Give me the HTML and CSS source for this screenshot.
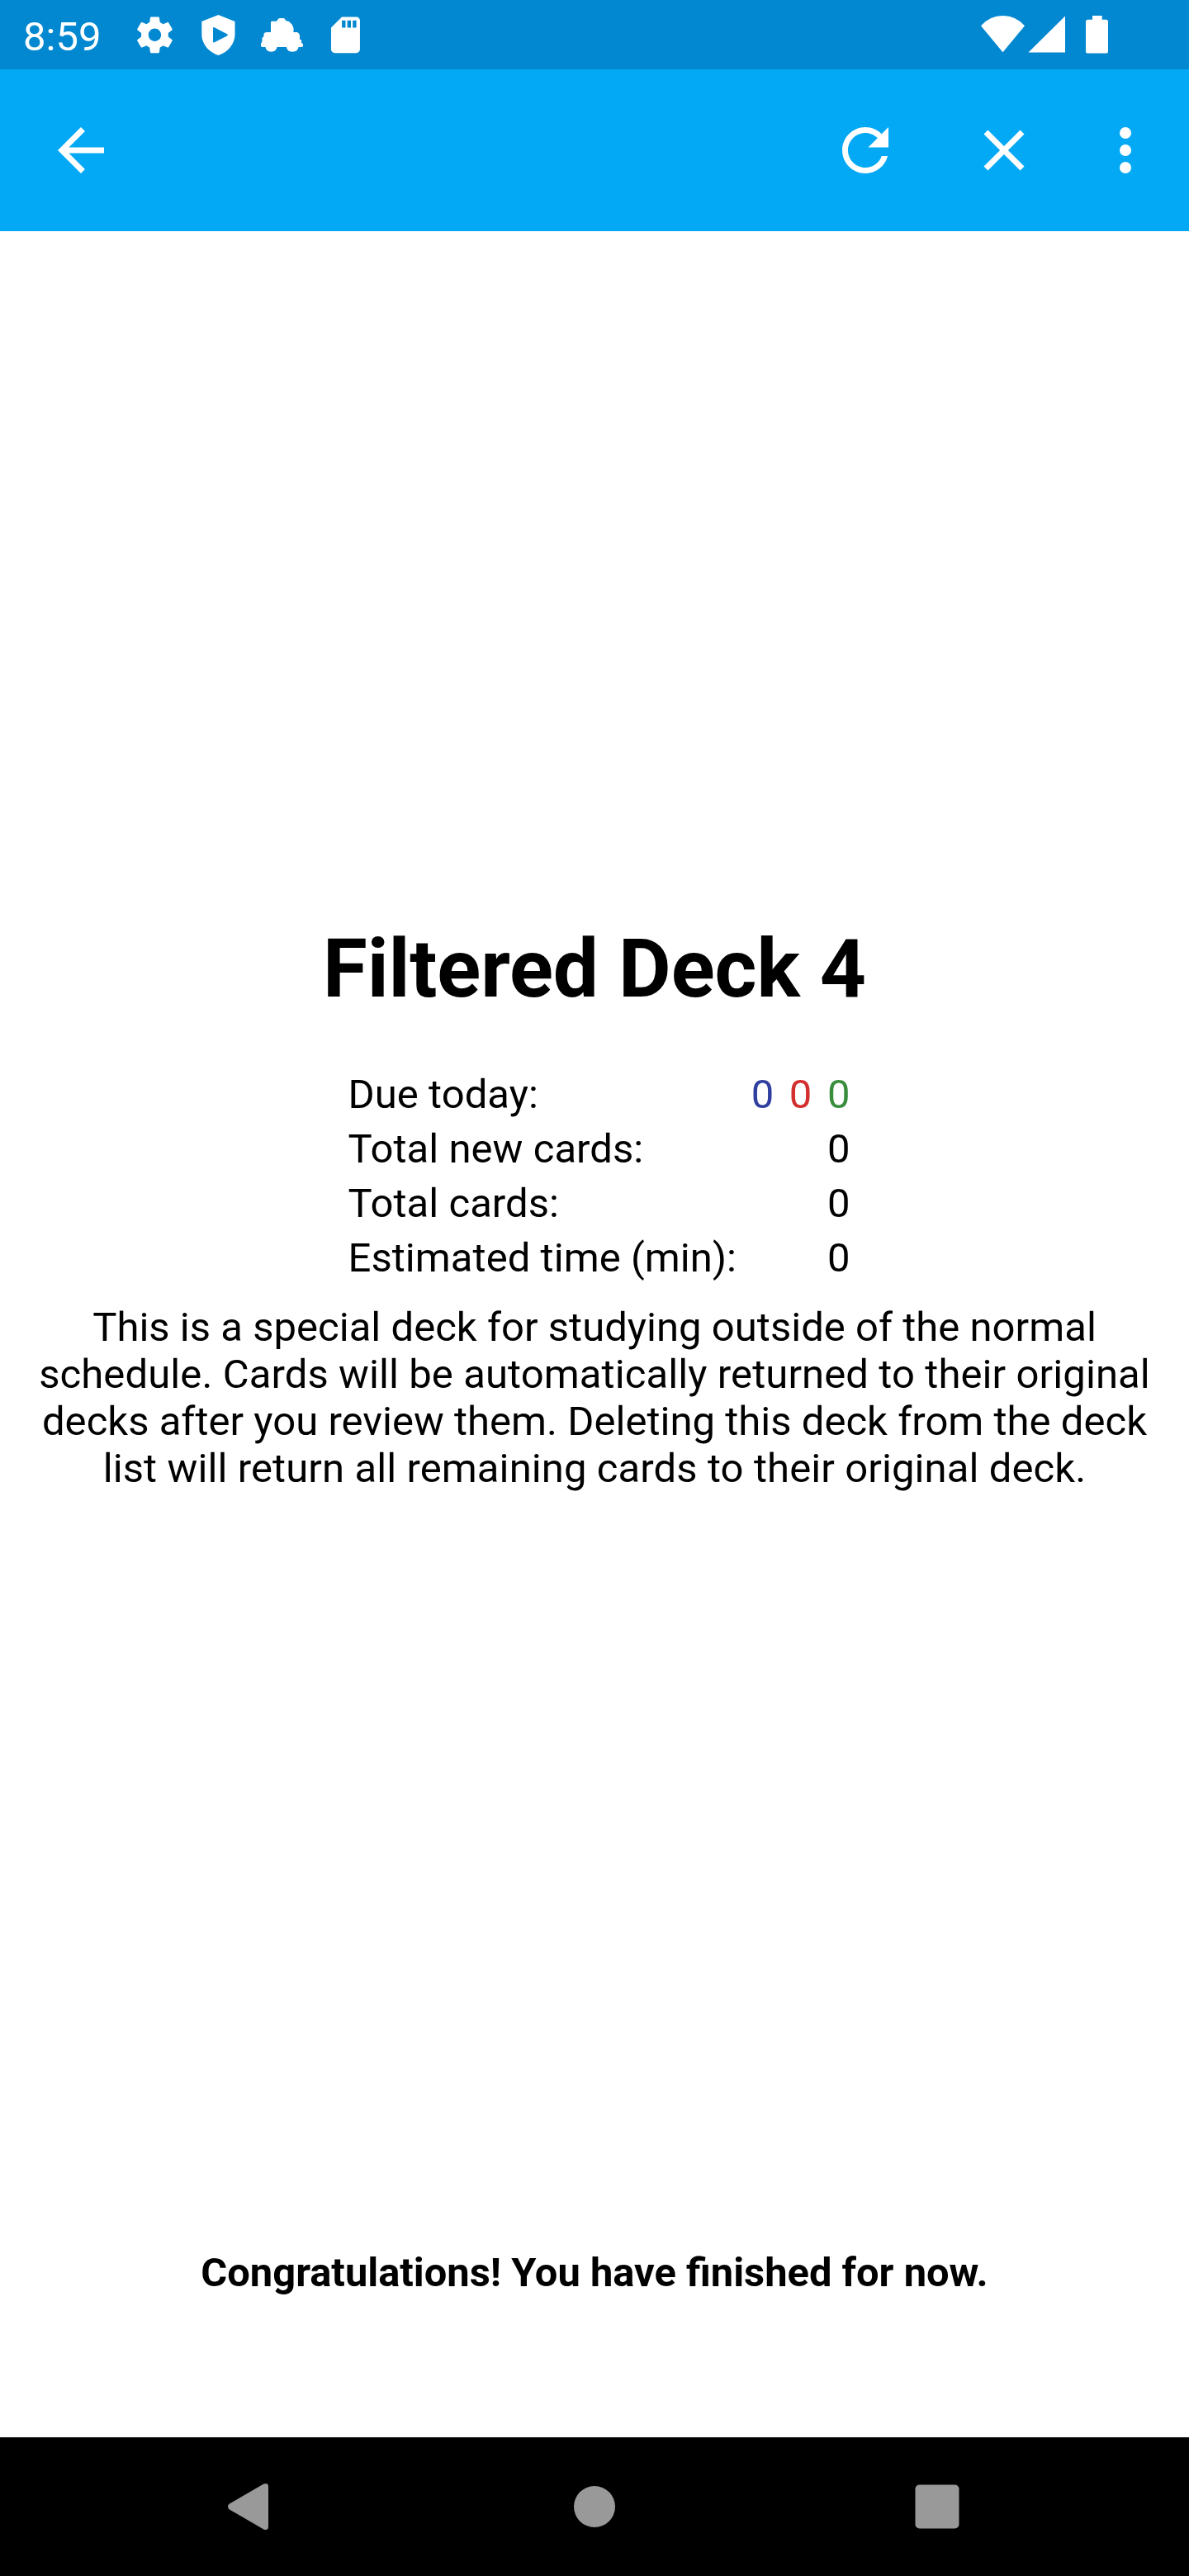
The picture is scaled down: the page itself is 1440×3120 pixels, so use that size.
FILE: index.html
```html
<!DOCTYPE html>
<html lang="en">
<head>
<meta charset="utf-8">
<title>Filtered Deck 4</title>
<link rel="stylesheet" href="styles.css">
</head>
<body>
<div class="screen">
  <div class="status-bar">
    <span class="clock">8:59</span>
    <svg class="notifications" width="290" height="84" viewBox="150 0 290 84" fill="currentColor">
      <path transform="translate(161.2 16) scale(2.1875)" d="M19.43 12.98c.04-.32.07-.64.07-.98s-.03-.66-.07-.98l2.11-1.65c.19-.15.24-.42.12-.64l-2-3.46c-.12-.22-.39-.3-.61-.22l-2.49 1c-.52-.4-1.08-.73-1.69-.98l-.38-2.65C14.46 2.18 14.25 2 14 2h-4c-.25 0-.46.18-.49.42l-.38 2.65c-.61.25-1.17.59-1.69.98l-2.49-1c-.23-.09-.49 0-.61.22l-2 3.46c-.13.22-.07.49.12.64l2.11 1.65c-.04.32-.07.65-.07.98s.03.66.07.98l-2.11 1.65c-.19.15-.24.42-.12.64l2 3.46c.12.22.39.3.61.22l2.49-1c.52.4 1.08.73 1.69.98l.38 2.65c.03.24.24.42.49.42h4c.25 0 .46-.18.49-.42l.38-2.65c.61-.25 1.17-.59 1.69-.98l2.49 1c.23.09.49 0 .61-.22l2-3.46c.12-.22.07-.49-.12-.64l-2.11-1.65zM12 15.5c-1.93 0-3.5-1.57-3.5-3.5s1.57-3.5 3.5-3.5 3.5 1.57 3.5 3.5-1.57 3.5-3.5 3.5z"/>
      <path fill-rule="evenodd" d="M264.4 18L284.5 26V42C284.5 53 276 63.500 264.4 67C253 63.500 244.3 53 244.3 42V26ZM258 34.200V50.200Q258 52 259.700 51.200L275 43.500Q276.600 42.400 275 41.300L259.700 33.200Q258 32.500 258 34.200Z"/>
      <path d="M328 27Q328 25.700 329.500 25.700H334.500Q336 25.500 336.500 23.500Q337 22 339 22H343.500Q345.500 22.500 346 25L350 26Q354 29 355.500 34V39H360Q362.500 40 363 42.500V48H365V51.500L367 53.500V56L365.500 57H361.500Q361 62.500 354 62.800Q347.500 62.500 347 57H335.500Q334.500 62.500 328.500 62.800Q322 62 321.500 57H317L316 55.500V53L317.500 50V46L319.500 44V41Q320.500 39 323 39H328Z"/>
      <path transform="translate(392.2 16) scale(2.1875)" d="M18 2h-8L4.02 8 4 20c0 1.1.9 2 2 2h12c1.1 0 2-.9 2-2V4c0-1.1-.9-2-2-2zm-6 6h-2V4h2v4zm3 0h-2V4h2v4zm3 0h-2V4h2v4z"/>
    </svg>
    <svg class="system" width="170" height="84" viewBox="1180 0 170 84" fill="currentColor">
      <path d="M1214.5 63.200L1188 31.200Q1199 19 1214.5 19T1241 31.200Z"/>
      <path d="M1245.5 63.600H1290V19.500Z"/>
      <path d="M1323 19H1334.700V23.700H1339.500Q1342 23.700 1342 26.200V62Q1342 64.600 1339.500 64.600H1317.600Q1315 64.600 1315 62V26.200Q1315 23.700 1317.600 23.700H1323Z"/>
    </svg>
  </div>
  <div class="toolbar">
    <svg class="icon" viewBox="0 0 24 24" fill="currentColor"><path d="M20 11H7.83l5.59-5.59L12 4l-8 8 8 8 1.41-1.41L7.83 13H20v-2z"/></svg>
    <div class="actions">
      <svg class="icon" viewBox="0 0 24 24" fill="currentColor"><path d="M17.65 6.35C16.2 4.9 14.21 4 12 4c-4.42 0-7.99 3.58-7.99 8s3.57 8 7.99 8c3.73 0 6.84-2.55 7.73-6h-2.08c-.82 2.33-3.04 4-5.65 4-3.31 0-6-2.69-6-6s2.69-6 6-6c1.66 0 3.14.69 4.22 1.78L13 11h7V4l-2.35 2.35z"/></svg>
      <svg class="icon" viewBox="0 0 24 24" fill="currentColor"><path d="M19 6.41L17.59 5 12 10.590 6.41 5 5 6.41 10.590 12 5 17.590 6.41 19 12 13.410 17.590 19 19 17.590 13.410 12z"/></svg>
      <svg class="icon more" viewBox="0 0 24 24" fill="currentColor"><circle cx="12" cy="6" r="2"/><circle cx="12" cy="12" r="2"/><circle cx="12" cy="18" r="2"/></svg>
    </div>
  </div>
  <main class="content">
    <h1 class="deck-name">Filtered Deck 4</h1>
    <div class="stats">
      <div class="row"><span>Due today:</span><span class="counts"><span class="new">0</span><span class="learn">0</span><span class="review">0</span></span></div>
      <div class="row"><span>Total new cards:</span><span>0</span></div>
      <div class="row"><span>Total cards:</span><span>0</span></div>
      <div class="row"><span>Estimated time (min):</span><span>0</span></div>
    </div>
    <p class="description">This is a special deck for studying outside of the normal<br><span class="loose">schedule. Cards will be automatically returned to their original</span><br>decks after you review them. Deleting this deck from the deck<br><span class="loose">list will return all remaining cards to their original deck.</span></p>
    <p class="finished">Congratulations! You have finished for now.</p>
  </main>
  <div class="nav-bar">
    <svg width="1440" height="168" viewBox="0 2952 1440 168" fill="currentColor">
      <path d="M277.5 3032.800L319.300 3008.600Q325 3006.500 325 3012V3060Q325 3065.500 319.300 3063.400L277.5 3039.200Q274.500 3036 277.5 3032.800Z"/>
      <circle cx="720" cy="3036" r="25"/>
      <rect x="1108.5" y="3009.5" width="53" height="53" rx="5"/>
    </svg>
  </div>
</div>
</body>
</html>
```

FILE: styles.css
```css
body {
  margin: 0;
  background: #fff;
  color: #000;
  font: 49px/57px Roboto, sans-serif;
}
.screen {
  display: flex;
  flex-direction: column;
  height: 3120px;
}
.status-bar {
  display: flex;
  height: 84px;
  background: #0288d1;
  color: #fff;
}
.status-bar svg {
  flex: none;
}
.clock {
  width: 122px;
  padding: 16px 0 0 28px;
}
.system {
  margin: 0 90px 0 auto;
}
.toolbar {
  display: flex;
  align-items: center;
  justify-content: space-between;
  height: 196px;
  padding: 0 35px 0 56px;
  background: #03a9f4;
  color: #fff;
}
.icon {
  width: 84px;
  height: 84px;
}
.actions {
  display: flex;
  gap: 84px;
}
.more {
  margin-left: -21px;
}
.content {
  display: flex;
  flex: 1;
  flex-direction: column;
  align-items: center;
  padding-top: 836px;
}
.deck-name {
  margin: 0;
  font-size: 98px;
  font-weight: 700;
  line-height: 115px;
  letter-spacing: -0.12px;
}
.stats {
  width: 608px;
  margin: 62px 0 22px 11px;
  letter-spacing: 0.06px;
}
.row {
  display: flex;
  justify-content: space-between;
  padding: 4px 0 5px;
}
.counts {
  display: flex;
  gap: 18.5px;
}
.new {
  color: #303f9f;
}
.learn {
  color: #d32f2f;
}
.review {
  color: #388e3c;
}
.description {
  margin: 0;
  text-align: center;
  white-space: nowrap;
  letter-spacing: 0.03px;
}
.loose {
  letter-spacing: 0.1px;
}
.finished {
  margin: auto 0 171px;
  font-size: 48.85px;
  font-weight: 700;
}
.nav-bar {
  height: 168px;
  background: #000;
  color: #999;
}
.nav-bar svg {
  display: block;
}
```
